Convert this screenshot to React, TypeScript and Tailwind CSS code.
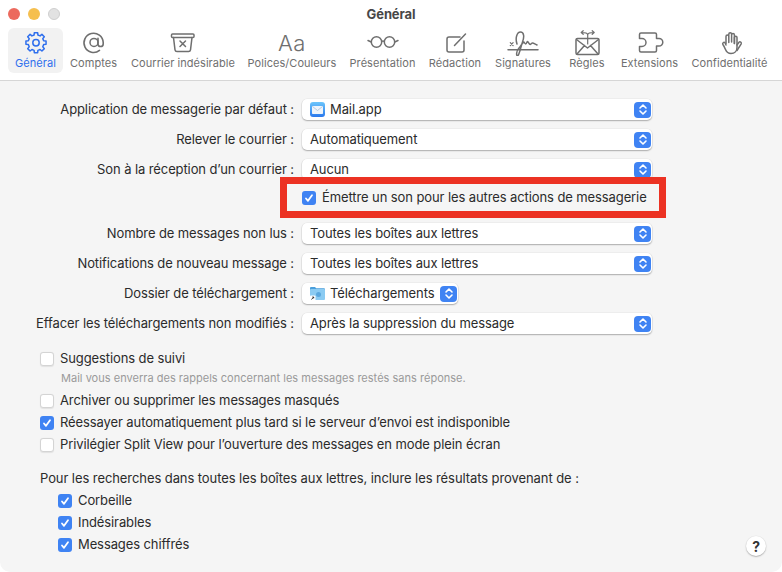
import React from "react";

const Stroke = ({ children }: { children: React.ReactNode }) => (
  <svg viewBox="0 0 32 28" width={32} height={28} fill="none" stroke="currentColor" strokeWidth={1.5} strokeLinecap="round" strokeLinejoin="round">
    {children}
  </svg>
);

const gearPath = (() => {
  const pts: string[] = [];
  const cx = 16, cy = 14.7, teeth = 8;
  for (let i = 0; i < teeth; i++) {
    const a = (i / teeth) * Math.PI * 2 - Math.PI / 2;
    const s = Math.PI / teeth;
    const p = (r: number, t: number) => `${(cx + r * Math.cos(t)).toFixed(2)} ${(cy + r * Math.sin(t)).toFixed(2)}`;
    pts.push(`${i === 0 ? "M" : "L"}${p(10.2, a - s * 0.42)}`);
    pts.push(`L${p(10.2, a + s * 0.42)}`);
    pts.push(`L${p(7.9, a + s * 0.62)}`);
    pts.push(`L${p(7.9, a + s * 1.38)}`);
  }
  return pts.join(" ") + "Z";
})();

const icons: Record<string, React.ReactNode> = {
  gear: (
    <Stroke>
      <path d={gearPath} />
      <circle cx="16" cy="14.7" r="3.2" />
    </Stroke>
  ),
  at: (
    <Stroke>
      <circle cx="16" cy="14.4" r="4" />
      <path d="M20 10.400v5.500a2.600 2.600 0 0 0 5.200 0v-1.500A9.600 9.600 0 1 0 21.500 22.400" strokeWidth={1.6} />
    </Stroke>
  ),
  junk: (
    <Stroke>
      <rect x="4.500" y="6" width="22.500" height="3.500" rx="1" />
      <path d="M6.500 9.500l1.500 12.300a2 2 0 0 0 2 1.700h11.500a2 2 0 0 0 2-1.700L25 9.500" />
      <path d="M13 13l5.500 5.500M18.500 13L13 18.500" />
    </Stroke>
  ),
  glasses: (
    <Stroke>
      <circle cx="9.500" cy="14" r="5.200" />
      <circle cx="22.500" cy="14" r="5.200" />
      <path d="M14.700 13.400q1.300-.8 2.600 0M4.300 14L1 12.500M27.700 14L31 12.500" />
    </Stroke>
  ),
  compose: (
    <Stroke>
      <path d="M21 9H10a2 2 0 0 0-2 2v11a2 2 0 0 0 2 2h13a2 2 0 0 0 2-2V13" />
      <path d="M15.500 17.500L26.500 6" />
    </Stroke>
  ),
  signature: (
    <Stroke>
      <path d="M1 21.700h30" />
      <path d="M3.300 14.700l2.800 2.800M6.100 14.700l-2.800 2.800" strokeWidth={1.200} />
      <path d="M10 16C8 10 10 4 13.500 4 17 4 17.500 9 15.500 14 14 18 12.500 26 11 27.500 9 29 9 23 12 20 14 18 15 15 17 14 18 16 19 17 20 14 21 12 22 18 24 16 25 14 26 15 30 17" />
    </Stroke>
  ),
  rules: (
    <Stroke>
      <rect x="5" y="10.500" width="23" height="16" rx="1.500" />
      <path d="M5.500 11.500L16.500 20l11-8.500M6 26l7.500-8.500M27 26l-7.500-8.500" />
      <path d="M16.700 16V7c0-2-2-2.500-6.500-2.500M16.700 7c0-2 2-2.500 6.500-2.500M12.200 2.700l-2 1.800 2 1.800M21.200 2.700l2 1.800-2 1.800" strokeWidth={1.200} />
    </Stroke>
  ),
  puzzle: (
    <Stroke>
      <path d="M7 5h14a1.500 1.500 0 0 1 1.500 1.500v4h2.500a3.800 3.800 0 0 1 0 7.600h-2.500v4.400a1.500 1.500 0 0 1-1.500 1.500H7a1.500 1.500 0 0 1-1.500-1.500v-4H8a3.800 3.800 0 0 0 0-8H5.500v-4A1.500 1.500 0 0 1 7 5z" />
    </Stroke>
  ),
  hand: (
    <Stroke>
      <g transform="translate(1 1.500)">
        <path d="M11 14V7a1.400 1.400 0 0 1 2.800 0v6M13.800 12.500V4.700a1.400 1.400 0 0 1 2.800 0v7.800M16.600 12.500V5.500a1.400 1.400 0 0 1 2.800 0V14" />
        <path d="M19.400 14V8a1.300 1.300 0 0 1 2.600 0v10c0 3.500-2.300 6-6 6-3 0-4.500-1.500-5.500-4-.6-1.500-1.200-3-2.600-5a1.400 1.400 0 0 1 2.100-1.800L11 15.500" />
        <path d="M22 15.500l2-2.800a1.400 1.400 0 0 1 2.200 1.600L22 21" />
      </g>
    </Stroke>
  ),
};

const tabs = [
  { label: "Général", icon: "gear", w: "w-[55px]" },
  { label: "Comptes", icon: "at", w: "w-[61px]" },
  { label: "Courrier indésirable", icon: "junk", w: "w-[118px]" },
  { label: "Polices/Couleurs", icon: "Aa", w: "w-[100px]" },
  { label: "Présentation", icon: "glasses", w: "w-[81px]" },
  { label: "Rédaction", icon: "compose", w: "w-[64px]" },
  { label: "Signatures", icon: "signature", w: "w-[72px]" },
  { label: "Règles", icon: "rules", w: "w-[56px]" },
  { label: "Extensions", icon: "puzzle", w: "w-[69px]" },
  { label: "Confidentialité", icon: "hand", w: "w-[91px]" },
];

const Stepper = () => (
  <span className="flex h-[16px] w-[17px] items-center justify-center rounded-[4px] bg-[#3f83f3]">
    <svg width="10" height="13" viewBox="0 0 10 13" fill="none" stroke="white" strokeWidth="1.600" strokeLinecap="round" strokeLinejoin="round">
      <path d="M2 5L5 2l3 3M2 8l3 3 3-3" />
    </svg>
  </span>
);

const MailIcon = () => (
  <span className="flex h-[15px] w-[15px] items-center justify-center rounded-[3px] bg-gradient-to-b from-[#6cc5fb] to-[#2b78ec]">
    <svg width="11" height="8" viewBox="0 0 11 8">
      <rect width="11" height="8" rx="0.8" fill="#eef4fb" />
      <path d="M0.500 0.500L5.500 4.500l5-4" fill="none" stroke="#9db7d6" strokeWidth="0.7" />
    </svg>
  </span>
);

const FolderIcon = () => (
  <svg width="15" height="15" viewBox="0 0 15 15">
    <path d="M0 2a1 1 0 0 1 1-1h4l1.200 1.300H14a1 1 0 0 1 1 1V4H0z" fill="#4a9fdc" />
    <rect x="0" y="3" width="15" height="11" rx="1" fill="#8bcbf2" />
    <circle cx="8.500" cy="8.500" r="2.500" fill="#5ba8de" />
    <rect x="0" y="9.500" width="5.500" height="5.500" rx="0.800" fill="#fff" />
    <path d="M1.500 13.500l2-2.300M2.300 11h1.400v1.400" fill="none" stroke="#222" strokeWidth="0.9" />
  </svg>
);

const Select = ({ value, icon, fit }: { value: string; icon?: React.ReactNode; fit?: boolean }) => (
  <div className={`flex h-[21px] items-center justify-between rounded-[5px] bg-white pl-[8px] pr-[1px] shadow-[0_0_0_0.5px_rgba(0,0,0,0.06),0_1px_1.500px_rgba(0,0,0,0.28)] ${fit ? "w-[156px]" : "w-[350px]"}`}>
    <span className="flex items-center gap-[5px] text-[13px] text-[#2b2b2b]">
      {icon}
      {value}
    </span>
    <Stepper />
  </div>
);

const Row = ({ label, className = "", ...rest }: { label: string; value: string; icon?: React.ReactNode; fit?: boolean; className?: string }) => (
  <div className={`flex h-[21px] items-center gap-[8px] ${className}`}>
    <span className="w-[294px] text-right text-[13px] text-[#2b2b2b]">{label}</span>
    <Select {...rest} />
  </div>
);

const Check = ({ checked, label, className = "" }: { checked?: boolean; label: string; className?: string }) => (
  <div className={`flex h-[16px] items-center gap-[6px] text-[13px] text-[#2b2b2b] ${className}`}>
    {checked ? (
      <span className="flex h-[14px] w-[14px] items-center justify-center rounded-[3px] bg-[#3f83f3]">
        <svg width="10" height="10" viewBox="0 0 10 10" fill="none" stroke="white" strokeWidth="1.800" strokeLinecap="round" strokeLinejoin="round">
          <path d="M2 5.500l2 2.300L8 2.200" />
        </svg>
      </span>
    ) : (
      <span className="h-[14px] w-[14px] rounded-[3px] border border-[#d4d4d4] bg-white shadow-[0_0.5px_1px_rgba(0,0,0,0.08)]" />
    )}
    <span>{label}</span>
  </div>
);

export default function App() {
  return (
    <div className="relative h-[572px] w-[782px] overflow-hidden bg-white font-['Inter',sans-serif] tracking-[-0.1px] antialiased">
      <header className="relative h-[81px] border-b border-[#d6d6d6] bg-white">
        <div className="flex h-[28px] items-center pl-[8px]">
          <div className="flex items-center gap-[8px]">
            <span className="h-[12px] w-[12px] rounded-full bg-[#ec6a5e]" />
            <span className="h-[12px] w-[12px] rounded-full bg-[#f5bf4f]" />
            <span className="h-[12px] w-[12px] rounded-full border border-[#cfcfcf] bg-[#e2e2e2]" />
          </div>
        </div>
        <div className="absolute left-0 right-0 top-[5px] text-center text-[13px] font-bold text-[#474747]">Général</div>
        <nav className="flex pl-[8px]">
          {tabs.map((t, i) => (
            <div key={t.label} className={`flex h-[45px] flex-col items-center justify-start rounded-[6px] ${t.w} ${i === 0 ? "bg-[#f2f2f2] text-[#2f6fed]" : "text-[#6f6f6f]"}`}>
              <span className="flex h-[28px] items-center justify-center">
                {t.icon === "Aa" ? <span className="pt-[1px] text-[22px] font-light leading-[28px] tracking-[0.5px] text-[#6f6f6f]">Aa</span> : icons[t.icon]}
              </span>
              <span className="whitespace-nowrap text-[11px] leading-[14px] tracking-[0.05px]">{t.label}</span>
            </div>
          ))}
        </nav>
      </header>

      <main className="relative h-[491px] rounded-b-[10px] bg-[#f5f5f5] pt-[18px]">
        <Row label="Application de messagerie par défaut :" value="Mail.app" icon={<MailIcon />} />
        <Row className="mt-[9px]" label="Relever le courrier :" value="Automatiquement" />
        <Row className="mt-[9px]" label="Son à la réception d’un courrier :" value="Aucun" />
        <Check checked className="ml-[302px] mt-[10px]" label="Émettre un son pour les autres actions de messagerie" />
        <Row className="mt-[17px]" label="Nombre de messages non lus :" value="Toutes les boîtes aux lettres" />
        <Row className="mt-[9px]" label="Notifications de nouveau message :" value="Toutes les boîtes aux lettres" />
        <Row className="mt-[9px]" label="Dossier de téléchargement :" value="Téléchargements" icon={<FolderIcon />} fit />
        <Row className="mt-[9px]" label="Effacer les téléchargements non modifiés :" value="Après la suppression du message" />

        <div className="ml-[40px] mt-[17px]">
          <Check label="Suggestions de suivi" />
          <div className="ml-[21px] mt-[4px] text-[11px] leading-[14px] tracking-[0.02px] text-[#9a9a9a]">Mail vous enverra des rappels concernant les messages restés sans réponse.</div>
          <Check className="mt-[8px]" label="Archiver ou supprimer les messages masqués" />
          <Check checked className="mt-[6px]" label="Réessayer automatiquement plus tard si le serveur d’envoi est indisponible" />
          <Check className="mt-[6px]" label="Privilégier Split View pour l’ouverture des messages en mode plein écran" />
          <div className="mt-[17px] h-[16px] text-[13px] leading-[16px] tracking-[-0.08px] text-[#2b2b2b]">Pour les recherches dans toutes les boîtes aux lettres, inclure les résultats provenant de :</div>
          <div className="ml-[18px] mt-[7px] flex flex-col gap-[6px]">
            <Check checked label="Corbeille" />
            <Check checked label="Indésirables" />
            <Check checked label="Messages chiffrés" />
          </div>
        </div>

        <div className="absolute bottom-[16px] right-[16px] flex h-[20px] w-[20px] items-center justify-center rounded-full bg-white text-[14px] font-bold text-[#333] shadow-[0_0_0_0.5px_rgba(0,0,0,0.05),0_1px_1.500px_rgba(0,0,0,0.25)]">?</div>
      </main>

      <div className="absolute left-[280px] top-[177px] h-[41px] w-[386px] border-[7px] border-[#ec3223]" />
    </div>
  );
}
